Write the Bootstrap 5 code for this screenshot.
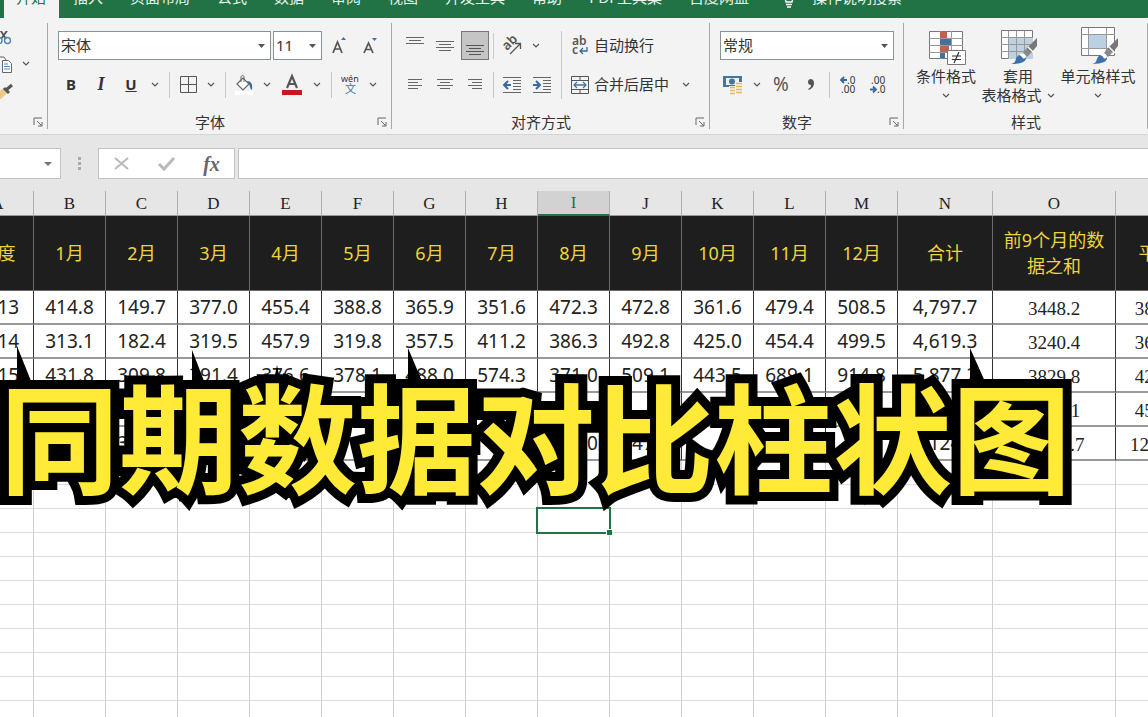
<!DOCTYPE html>
<html lang="zh-CN">
<head>
<meta charset="utf-8">
<meta name="viewport" content="width=device-width, initial-scale=1">
<title>同期数据对比柱状图</title>
<link href="https://cdn.jsdelivr.net/npm/bootstrap@5.3.0/dist/css/bootstrap.min.css" rel="stylesheet">
<style>
  :root { --xl-green: #217346; --xl-ink: #333; --xl-line: #a8a8a8; }
  body { font-family: "Noto Sans", "Noto Sans CJK SC", sans-serif; font-size: 15px; color: var(--xl-ink); background: #fff; overflow: hidden; }
  svg { display: block; overflow: visible; flex: none; }

  /* tab strip */
  .xl-tabs { background: var(--xl-green); height: 18px; padding-left: 4px; overflow: hidden; white-space: nowrap; }
  .xl-tabs .nav-link { color: #e8f3ec; padding: 0; margin-right: 27px; height: 18px; line-height: 24px; margin-top: -15px; }
  .xl-tabs .nav-link.active { background: #f3f3f3; color: var(--xl-green); margin: 0 14px 0 0; padding: 0 12px; width: 55px; line-height: 0; }
  .xl-tabs .nav-link.active span { display: block; margin-top: -3px; }
  .xl-tabs .tell { gap: 16px; margin-left: 6px; }
  .xl-tabs .tell svg { margin-top: 2px; }

  /* ribbon */
  .ribbon { background: #f3f3f3; height: 117px; border-bottom: 1px solid #d5d5d5; }
  .grp { position: relative; padding-top: 13px; flex: none; }
  .grp::after { content: ""; position: absolute; right: 0; top: 5px; bottom: 5px; width: 1px; background: var(--xl-line); }
  .g-clip { width: 48px; } .g-font { width: 344px; } .g-align { width: 318px; } .g-num { width: 194px; } .g-style { width: 244px; }
  .tools { height: 68px; }
  .tools.flex-column { gap: 10px; }
  .tools .line { height: 29px; }
  .grp-name { height: 22px; margin-top: 12px; line-height: 22px; }
  .ribbon .btn { --bs-btn-color: #333; padding: 0; border: 0; border-radius: 0; width: 30px; height: 29px; font-size: 15px; display: flex; align-items: center; justify-content: center; flex: none; white-space: nowrap; }
  .ribbon .btn-ic { width: 28px; }
  .ribbon .btn-mid { width: 32px; }
  .ribbon .btn-dd { width: 18px; }
  .ribbon .btn-wide { width: auto; gap: 5px; }
  .ribbon .btn-launch { width: 20px; height: 22px; }
  .ribbon .btn.on { background: #c5c5c5; box-shadow: inset 0 0 0 1px #777; width: 28px; margin: 0 1px; }
  .ribbon .btn.ital { font: italic bold 18px "Liberation Serif", serif; }
  .ribbon .btn.pinyin { font-size: 12px; line-height: 10px; }
  .pinyin .han { color: #3b78ad; }
  .ribbon .btn.pct { font-size: 19px; color: #555; }
  .bar { width: 10px; height: 26px; flex: none; background: linear-gradient(#c8c8c8, #c8c8c8) center / 1px 100% no-repeat; }
  .bar-sm { width: 7px; }
  .tall { width: 1px; background: #c8c8c8; margin: 0 9px 0 4px; }
  .xl-pick { border: 1px solid #8a9299; border-radius: 0; height: 29px; padding: 0 18px 0 2px; font-size: 15px; color: #333; background-color: #fff; background-size: 7px 4px; background-position: right 5px center;
    background-image: url("data:image/svg+xml,%3Csvg xmlns='http://www.w3.org/2000/svg' viewBox='0 0 7 4'%3E%3Cpath d='M0 0h7L3.500 4z' fill='%23555'/%3E%3C/svg%3E"); }
  .pick-line { padding-left: 10px; gap: 2px; }
  .pick-font { width: 213px; } .pick-size { width: 49px; } .pick-num { width: 174px; }
  .big-row { padding-left: 6px; }
  .ribbon .btn-big { width: 72px; height: 75px; flex-direction: column; justify-content: flex-start; line-height: 19px; }
  .btn-big .pic { height: 36px; }
  .btn-big .dd { height: 19px; display: flex; align-items: center; justify-content: center; gap: 5px; }

  /* formula bar */
  .fbar { background: #e6e6e6; height: 56px; padding: 13px 0 12px; }
  .fbox { background: #fff; border: 1px solid #c3c3c3; height: 31px; border-radius: 0; }
  .fbox.namebox { width: 61px; border-left: 0; padding: 0 8px; }
  .fx-set { width: 137px; margin-right: 3px; }
  .fx-set .btn { width: 45px; padding: 0; border: 0; display: flex; justify-content: center; align-items: center; }
  .fx-set .fxi { font: italic bold 20px/24px "Liberation Serif", serif; color: #666; }

  /* worksheet */
  .sheet { position: relative; overflow: hidden; height: calc(100vh - 191px); background: linear-gradient(#e6e6e6, #e6e6e6) top / 100% 24px no-repeat; }
  .cells { table-layout: fixed; border-collapse: separate; border-spacing: 0; width: 1254px; margin-left: -38px; text-align: center; color: #222; }
  .cells th, .cells td { padding: 0; height: 24px; font-weight: 400; border-right: 1px solid #d0d0d0; border-bottom: 1px solid #dcdcdc; white-space: nowrap; overflow: hidden; }
  .cells .w-mon { width: 72px; } .cells .w-sum { width: 95px; } .cells .w-nine { width: 123px; } .cells .w-avg { width: 100px; }
  .cells .letters th { height: 25px; background: #e6e6e6; font: 17px/23px "Liberation Serif", serif; padding-top: 1px; border-right-color: #b0b0b0; border-bottom-color: #9a9a9a; }
  .cells .letters .picked { background: #d2d2d2; color: var(--xl-green); border-bottom: 2px solid var(--xl-green); line-height: 22px; }
  .cells .titles th { background: #1e1e1e; color: #f0d43a; height: 75px; padding: 0 8px; font-size: 18px; line-height: 26px; border-color: #6a6a6a; white-space: normal; }
  .cells .figures td { height: 34px; font-size: 19px; line-height: 30px; border-right-color: #333; border-bottom: 2px solid #999; }
  .cells .figures .song { font-family: "Liberation Serif", serif; padding-top: 3px; line-height: 28px; }
  .cells td.cursor { position: relative; overflow: visible; }
  .cells td.cursor::before { content: ""; position: absolute; inset: -2px; border: 2px solid var(--xl-green); }
  .cells td.cursor::after { content: ""; position: absolute; right: -3px; bottom: -3px; width: 6px; height: 6px; background: var(--xl-green); border: 1px solid #fff; border-width: 1px 0 0 1px; }

  /* caption laid over the sheet */
  .caption-over { position: absolute; left: 0; top: 183px; margin: 0; white-space: nowrap; font: 700 119px/119px "Noto Sans CJK SC", sans-serif; color: #ffea38; -webkit-text-stroke: 18px #000; paint-order: stroke fill; }
  .spikes { position: absolute; left: 0; top: 155px; }
</style>
</head>
<body>
<svg width="0" height="0" class="position-absolute" aria-hidden="true">
  <symbol id="dd" viewBox="0 0 8 5"><path d="M1 1l3 3 3-3" fill="none" stroke="#555" stroke-width="1.200"/></symbol>
  <symbol id="launch" viewBox="0 0 10 10"><path d="M1 8V1h8M4 4l5 5M9 5v4H5" fill="none" stroke="#666"/></symbol>
  <symbol id="brush" viewBox="0 0 28 28"><path d="M27 1v8l-6 7-5-4z" fill="#777"/><path d="M18 10l6 6" stroke="#fff" stroke-width="1.500"/><path d="M16 12l5 4-4 4-4-4z" fill="#888"/><path d="M1 27c5-1 4-4 6-7 3-4 8-3 9 0 1 4-4 7-15 7z" fill="#3d6fa8"/><path d="M9 18c3-3 7-1 7 2-1 2-3 2-4 0-1-1-2-2-3-2z" fill="#fff"/></symbol>
</svg>

<nav class="nav xl-tabs flex-nowrap">
  <a class="nav-link active" href="#"><span>开始</span></a>
  <a class="nav-link" href="#">插入</a>
  <a class="nav-link" href="#">页面布局</a>
  <a class="nav-link" href="#">公式</a>
  <a class="nav-link" href="#">数据</a>
  <a class="nav-link" href="#">审阅</a>
  <a class="nav-link" href="#">视图</a>
  <a class="nav-link" href="#">开发工具</a>
  <a class="nav-link" href="#">帮助</a>
  <a class="nav-link" href="#">PDF工具集</a>
  <a class="nav-link" href="#">百度网盘</a>
  <a class="nav-link tell d-flex" href="#"><svg width="14" height="22" viewBox="0 0 14 22" fill="none" stroke="#fff" stroke-width="1.400"><path d="M4 15c0-3-3-4-3-8a6 6 0 0 1 12 0c0 4-3 5-3 8zM4 17.500h6M5 20h4"/></svg>操作说明搜索</a>
</nav>

<header class="ribbon d-flex">
  <section class="grp g-clip">
    <div class="tools d-flex overflow-hidden">
      <svg width="13" height="68" viewBox="0 0 13 68" fill="none"><path d="M-1-3L6 8M9-3L1 8" stroke="#555" stroke-width="1.800"/><circle cx="7.500" cy="9.500" r="3" stroke="#4a86b8" stroke-width="1.400"/><circle cx="-1" cy="9.500" r="3" stroke="#4a86b8" stroke-width="1.400"/><path d="M-4 26h8l2 3M-4 26v12" stroke="#666"/><path d="M2.500 29.500h6l3 3v9h-9z" fill="#fff" stroke="#666"/><path d="M4 33h4M4 35.500h6M4 38h6" stroke="#4a86b8"/><path d="M-2 61l6-4 4 4-7 7-5-2z" fill="#eec888"/><path d="M4 57l5 5M6 59l6-5" stroke="#555" stroke-width="3"/></svg>
      <button class="btn btn-dd mt-3 ms-1" type="button" aria-label="复制选项"><svg width="8" height="5" class="mt-1"><use href="#dd"/></svg></button>
    </div>
    <div class="grp-name d-flex justify-content-end"><button class="btn btn-launch" type="button" aria-label="剪贴板设置"><svg width="10" height="10"><use href="#launch"/></svg></button></div>
  </section>

  <section class="grp g-font">
    <div class="tools d-flex flex-column">
      <div class="line d-flex pick-line">
        <select class="form-select xl-pick pick-font" aria-label="字体"><option>宋体</option></select>
        <select class="form-select xl-pick pick-size" aria-label="字号"><option>11</option></select>
        <button class="btn" type="button" aria-label="增大字号"><svg width="14" height="18" viewBox="0 0 14 18"><path d="M1 16L5.500 5 10 16M2.500 12h6" fill="none" stroke="#555" stroke-width="1.700"/><path d="M9 3h5l-2.500-3z" fill="#3d6fa8"/></svg></button>
        <button class="btn btn-ic" type="button" aria-label="减小字号"><svg width="14" height="18" viewBox="0 0 14 18"><path d="M1 16L5.500 6 10 16M2.500 12.500h6" fill="none" stroke="#555" stroke-width="1.700"/><path d="M9 1h5l-2.500 3z" fill="#3d6fa8"/></svg></button>
      </div>
      <div class="line d-flex align-items-center ps-2">
        <button class="btn fw-bold" type="button">B</button>
        <button class="btn ital" type="button">I</button>
        <button class="btn fw-bold text-decoration-underline" type="button">U</button>
        <button class="btn btn-dd" type="button" aria-label="下划线选项"><svg width="8" height="5"><use href="#dd"/></svg></button>
        <span class="bar"></span>
        <button class="btn btn-ic" type="button" aria-label="边框"><svg width="17" height="17" viewBox="0 0 17 17"><path d="M.5.5h16v16H.5zM8.500 0v17M0 8.500h17" fill="none" stroke="#555"/></svg></button>
        <button class="btn btn-dd" type="button" aria-label="边框选项"><svg width="8" height="5"><use href="#dd"/></svg></button>
        <span class="bar"></span>
        <button class="btn btn-ic" type="button" aria-label="填充颜色"><svg width="20" height="20" viewBox="0 0 20 20"><path d="M3 9l6-6 6 6-6 6z" fill="#fff" stroke="#666" stroke-width="1.200"/><path d="M7 7V2c0-2 3-2 3 0v5" fill="none" stroke="#666"/><path d="M13 6c4 0 6 3 5 9-2-1-2-4-3-6z" fill="#3f6f9c"/><path d="M1 16h18v4H1z" fill="#fff"/></svg></button>
        <button class="btn btn-dd" type="button" aria-label="填充选项"><svg width="8" height="5"><use href="#dd"/></svg></button>
        <button class="btn btn-mid" type="button" aria-label="字体颜色"><svg width="20" height="20" viewBox="0 0 20 20"><path d="M5 13L10 1l5 12M7 9h6" fill="none" stroke="#555" stroke-width="2.200"/><path d="M0 15h20v5H0z" fill="#c8171e"/></svg></button>
        <button class="btn btn-dd" type="button" aria-label="字体颜色选项"><svg width="8" height="5"><use href="#dd"/></svg></button>
        <span class="bar"></span>
        <button class="btn btn-ic pinyin flex-column" type="button"><svg width="18" height="20" viewBox="0 0 18 20" font-size="9"><text x="0" y="7" fill="#333">wén</text><text x="4" y="18" font-size="11" fill="#3b78ad">文</text></svg></button>
        <button class="btn btn-dd" type="button" aria-label="拼音选项"><svg width="8" height="5"><use href="#dd"/></svg></button>
      </div>
    </div>
    <div class="grp-name d-flex"><span class="flex-grow-1 text-center">字体</span><button class="btn btn-launch" type="button" aria-label="字体设置"><svg width="10" height="10"><use href="#launch"/></svg></button></div>
  </section>

  <section class="grp g-align">
    <div class="tools d-flex ps-2">
      <div class="d-flex flex-column justify-content-between">
        <div class="line d-flex align-items-center">
          <button class="btn" type="button" aria-label="顶端对齐"><svg width="18" height="18" viewBox="0 0 18 18"><path d="M0 .5h18M3 3.500h12M0 6.500h18" stroke="#666"/></svg></button>
          <button class="btn" type="button" aria-label="垂直居中"><svg width="18" height="18" viewBox="0 0 18 18"><path d="M0 4.500h18M3 7.500h12M0 10.500h18M3 13.500h12" stroke="#666"/></svg></button>
          <button class="btn on" type="button" aria-label="底端对齐"><svg width="18" height="18" viewBox="0 0 18 18"><path d="M0 8.500h18M3 11.500h12M0 14.500h18M3 17.500h12" stroke="#555"/></svg></button>
          <span class="bar bar-sm"></span>
          <button class="btn" type="button" aria-label="方向"><svg width="20" height="20" viewBox="0 0 20 20"><text transform="translate(5 15) rotate(-45)" font-size="13" font-weight="600" fill="#555">ab</text><path d="M8 18L18 8M13 7.500h5.500V13" fill="none" stroke="#555" stroke-width="1.300"/></svg></button>
          <button class="btn btn-dd" type="button" aria-label="方向选项"><svg width="8" height="5"><use href="#dd"/></svg></button>
        </div>
        <div class="line d-flex align-items-center">
          <button class="btn" type="button" aria-label="左对齐"><svg width="14" height="12" viewBox="0 0 14 12"><path d="M0 .5h14M0 3.500h10M0 6.500h14M0 9.500h10" stroke="#666"/></svg></button>
          <button class="btn" type="button" aria-label="居中"><svg width="16" height="12" viewBox="0 0 16 12"><path d="M0 .5h16M3 3.500h10M0 6.500h16M3 9.500h10" stroke="#666"/></svg></button>
          <button class="btn" type="button" aria-label="右对齐"><svg width="14" height="12" viewBox="0 0 14 12"><path d="M0 .5h14M4 3.500h10M0 6.500h14M4 9.500h10" stroke="#666"/></svg></button>
          <span class="bar bar-sm"></span>
          <button class="btn" type="button" aria-label="减少缩进"><svg width="18" height="16" viewBox="0 0 18 16"><path d="M0 .5h18M10 3.500h8M10 6.500h8M10 9.500h8M10 12.500h8M0 15.500h18" stroke="#666"/><path d="M8 8H2M5 4L1 8l4 4" fill="none" stroke="#3768a5" stroke-width="2"/></svg></button>
          <button class="btn" type="button" aria-label="增加缩进"><svg width="18" height="16" viewBox="0 0 18 16"><path d="M0 .5h18M10 3.500h8M10 6.500h8M10 9.500h8M10 12.500h8M0 15.500h18" stroke="#666"/><path d="M0 8h6M3 4l4 4-4 4" fill="none" stroke="#3768a5" stroke-width="2"/></svg></button>
        </div>
      </div>
      <span class="tall"></span>
      <div class="d-flex flex-column justify-content-between align-items-start">
        <button class="btn btn-wide" type="button"><svg width="18" height="20" viewBox="0 0 18 20"><g font-size="12" font-weight="600" fill="#555"><text x="1" y="9">ab</text><text x="1" y="18">c</text></g><path d="M16 11v4H9M12 12l-3 3 3 3" fill="none" stroke="#3768a5" stroke-width="1.300"/></svg>自动换行</button>
        <div class="d-flex align-items-center">
          <button class="btn btn-wide" type="button"><svg width="18" height="18" viewBox="0 0 18 18" fill="none" stroke="#555"><path d="M.5.5h17v17H.5zM.5 4.500h17M.5 13.500h17M9 .5v4M9 13.500v4"/><path d="M3 9h12M6 6L3 9l3 3M12 6l3 3-3 3" stroke="#3d78ad" stroke-width="1.300"/></svg>合并后居中</button>
          <button class="btn btn-dd ms-2" type="button" aria-label="合并选项"><svg width="8" height="5"><use href="#dd"/></svg></button>
        </div>
      </div>
    </div>
    <div class="grp-name d-flex"><span class="flex-grow-1 text-center">对齐方式</span><button class="btn btn-launch" type="button" aria-label="对齐设置"><svg width="10" height="10"><use href="#launch"/></svg></button></div>
  </section>

  <section class="grp g-num">
    <div class="tools d-flex flex-column">
      <div class="line d-flex justify-content-center"><select class="form-select xl-pick pick-num" aria-label="数字格式"><option>常规</option></select></div>
      <div class="line d-flex align-items-center ps-2">
        <button class="btn" type="button" aria-label="会计数字格式"><svg width="20" height="19" viewBox="0 0 20 19"><path d="M0 1h19v11H0z" fill="#41789f"/><path d="M3 3h13v7H3z" fill="#eaf1f5"/><circle cx="9" cy="6.500" r="3" fill="#41789f"/><path d="M12 7h8v12H6v-8h6z" fill="#f3f3f3"/><path d="M13 8.500h6M13 11.500h6M13 14.500h6M13 17.500h6M7 12.500h5M7 15.500h5M7 18.500h5" stroke="#e8b865" stroke-width="1.600"/></svg></button>
        <button class="btn btn-dd" type="button" aria-label="货币选项"><svg width="8" height="5"><use href="#dd"/></svg></button>
        <button class="btn pct" type="button">%</button>
        <button class="btn" type="button" aria-label="千位分隔"><svg width="8" height="12" viewBox="0 0 8 12"><path d="M1 3c0-4 6-4 6 1 0 4-3 6-5 7l-1-1c2-1 3-2 3-4-2 0-3-1-3-3z" fill="#555"/></svg></button>
        <span class="bar bar-sm"></span>
        <button class="btn" type="button" aria-label="增加小数位数"><svg width="16" height="18" viewBox="0 0 16 18"><g font-size="10" fill="#333"><text x="7" y="8">.0</text><text x="1" y="17">.00</text></g><path d="M7 4H2M4 1L1 4l3 3" fill="none" stroke="#3768a5" stroke-width="1.800"/></svg></button>
        <button class="btn" type="button" aria-label="减少小数位数"><svg width="16" height="18" viewBox="0 0 16 18"><g font-size="10" fill="#333"><text x="1" y="8">.00</text><text x="7" y="17">.0</text></g><path d="M0 13.500h5M3 10.500l3 3-3 3" fill="none" stroke="#3768a5" stroke-width="1.800"/></svg></button>
      </div>
    </div>
    <div class="grp-name d-flex"><span class="flex-grow-1 text-center">数字</span><button class="btn btn-launch" type="button" aria-label="数字设置"><svg width="10" height="10"><use href="#launch"/></svg></button></div>
  </section>

  <section class="grp g-style">
    <div class="tools d-flex big-row">
      <button class="btn btn-big" type="button"><svg class="pic" width="38" height="36" viewBox="0 0 38 36"><path d="M2.500.5h33v27h-33z" fill="#fff" stroke="#777"/><path d="M2 7.500h34M2 14.500h34M2 21.500h34M13.500 0v28M24.500 0v28" stroke="#999"/><path d="M13 1h7v6h-7zM13 15h9v6h-9z" fill="#c0604d"/><path d="M13 8h11v6H13zM13 22h5v5h-5z" fill="#41719c"/><path d="M20.500 19.500h18v14h-18z" fill="#fff" stroke="#777"/><path d="M25 25h9M25 28.500h9M32 21l-5 11" stroke="#333" stroke-width="1.200"/></svg>条件格式<span class="dd"><svg width="8" height="5"><use href="#dd"/></svg></span></button>
      <button class="btn btn-big" type="button"><svg class="pic" width="38" height="36" viewBox="0 0 38 36"><path d="M2.500-.5h31v28h-31z" fill="#fff" stroke="#777"/><path d="M10 7h24v21H10z" fill="#bfd0df"/><path d="M2 6.500h32M2 13.500h32M2 20.500h32M9.500 0v28M17.500 0v28M25.500 0v28" stroke="#999"/><use href="#brush" x="11" y="6" width="28" height="28"/></svg>套用<span class="dd">表格格式 <svg width="8" height="5"><use href="#dd"/></svg></span></button>
      <button class="btn btn-big ms-2" type="button"><svg class="pic" width="38" height="36" viewBox="0 0 38 36"><path d="M2.500-3.500h33v28h-33z" fill="#fff" stroke="#777"/><path d="M2 3.500h34M2 17.500h34M9.500-3v27M27.500-3v27" stroke="#999"/><path d="M10 4h17v13H10z" fill="#bcd0e4"/><use href="#brush" x="12" y="6" width="28" height="28"/></svg>单元格样式<span class="dd"><svg width="8" height="5"><use href="#dd"/></svg></span></button>
    </div>
    <div class="grp-name text-center">样式</div>
  </section>
</header>

<div class="fbar d-flex">
  <button class="fbox namebox d-flex align-items-center justify-content-end" type="button" aria-label="名称框"><svg width="8" height="4" viewBox="0 0 8 4"><path d="M0 0h8L4 4z" fill="#777"/></svg></button>
  <svg class="align-self-center mx-3" width="5" height="14" viewBox="0 0 5 14" fill="#aaa"><path d="M1 0h3v3H1zM1 5h3v3H1zM1 10h3v3H1z"/></svg>
  <div class="fbox fx-set d-flex">
    <button class="btn" type="button" aria-label="取消"><svg width="15" height="13" viewBox="0 0 15 13"><path d="M1 1l13 11M14 1L1 12" stroke="#b9b9b9" stroke-width="2"/></svg></button>
    <button class="btn" type="button" aria-label="输入"><svg width="17" height="13" viewBox="0 0 17 13"><path d="M1 7l5 5L16 1" fill="none" stroke="#b9b9b9" stroke-width="3"/></svg></button>
    <button class="btn fxi" type="button">fx</button>
  </div>
  <input class="fbox flex-grow-1 border-end-0" type="text" aria-label="编辑栏">
</div>

<main class="sheet">
  <table class="cells">
    <colgroup id="cols"></colgroup>
    <thead id="head"></thead>
    <tbody id="body"></tbody>
  </table>
  <svg class="spikes" width="1000" height="40" viewBox="0 0 1000 40" aria-hidden="true"><path d="M17 0l16 40H17zM192 4l14 36h-14zM408 2l16 38h-16zM970 2l17 38h-17zM277 19l4 20h-8z"/></svg>
  <h1 class="caption-over">同期数据对比柱状图</h1>
</main>

<script src="https://cdn.jsdelivr.net/npm/bootstrap@5.3.0/dist/js/bootstrap.bundle.min.js"></script>
<script>
  const letters = 'ABCDEFGHIJKLMNOP'.split('');
  const titles = ['年度', '1月', '2月', '3月', '4月', '5月', '6月', '7月', '8月', '9月', '10月', '11月', '12月', '合计', '前9个月的数据之和', '平均值'];
  const figures = [
    ['2013', '414.8', '149.7', '377.0', '455.4', '388.8', '365.9', '351.6', '472.3', '472.8', '361.6', '479.4', '508.5', '4,797.7', '3448.2', '3831.36'],
    ['2014', '313.1', '182.4', '319.5', '457.9', '319.8', '357.5', '411.2', '386.3', '492.8', '425.0', '454.4', '499.5', '4,619.3', '3240.4', '3600.44'],
    ['2015', '431.8', '309.8', '391.4', '376.6', '378.1', '488.0', '574.3', '371.0', '509.1', '443.5', '689.1', '914.8', '5,877.2', '3829.8', '4255.33'],
    ['', '', '', '', '', '', '', '', '', '', '', '', '', '', '4088.1', '4542.33'],
    ['', '', '363.3', '', '', '', '', '', '581.0', '547.4', '', '', '', '5,124.7', '11234.7', '12483.00']
  ];
  const width = i => i < 13 ? 'w-mon' : ['w-sum', 'w-nine', 'w-avg'][i - 13];
  cols.innerHTML = letters.map((_, i) => `<col class="${width(i)}">`).join('');
  head.innerHTML = '<tr class="letters">' + letters.map(l => `<th${l === 'I' ? ' class="picked"' : ''}>${l}</th>`).join('') + '</tr>'
    + '<tr class="titles">' + titles.map(t => `<th>${t}</th>`).join('') + '</tr>';
  const filled = figures.map(r => '<tr class="figures">' + r.map((v, i) => `<td${i > 13 ? ' class="song"' : ''}>${v}</td>`).join('') + '</tr>').join('');
  const empty = Array.from({ length: 12 }, (_, r) => '<tr>' + letters.map(l => `<td${r === 2 && l === 'I' ? ' class="cursor"' : ''}></td>`).join('') + '</tr>').join('');
  body.innerHTML = filled + empty;
</script>
</body>
</html>
